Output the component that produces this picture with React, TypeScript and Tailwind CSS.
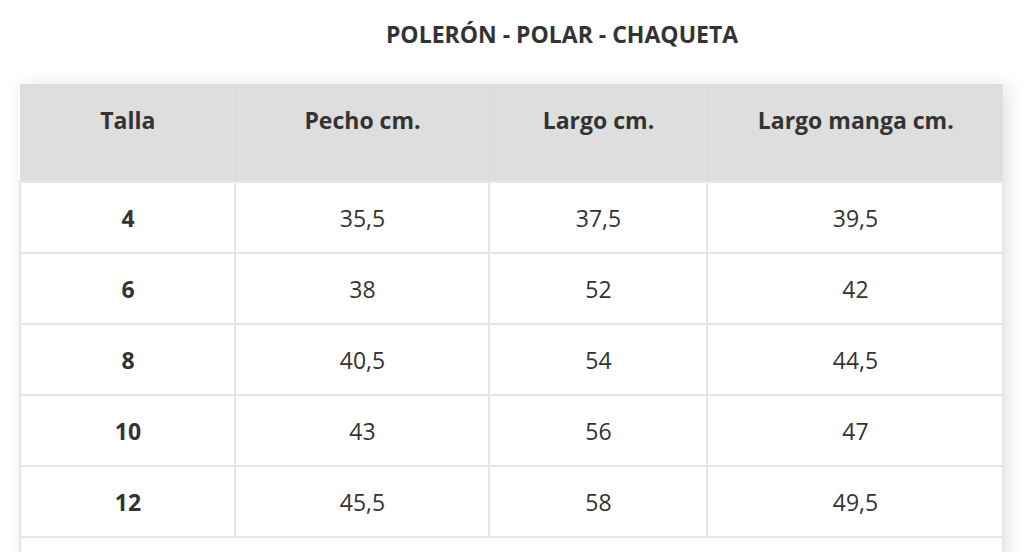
const rows = [
  ['4', '35,5', '37,5', '39,5'],
  ['6', '38', '52', '42'],
  ['8', '40,5', '54', '44,5'],
  ['10', '43', '56', '47'],
  ['12', '45,5', '58', '49,5'],
];

const headers = ['Talla', 'Pecho cm.', 'Largo cm.', 'Largo manga cm.'];
const widths = ['w-[215px]', 'w-[254px]', 'w-[218px]', 'w-[296px]'];

export default function App() {
  return (
    <div
      className="h-[552px] w-[1024px] overflow-hidden bg-white text-[#333]"
      style={{ fontFamily: '"Open Sans", "Liberation Sans", sans-serif' }}
    >
      <h2 className="pt-[20px] pl-[100px] text-center text-[23px] font-bold leading-[28px]">
        POLERÓN - POLAR - CHAQUETA
      </h2>

      <div className="ml-[19px] mt-[36px] w-[983px] shadow-[6px_2px_18px_rgba(0,0,0,0.12)]">
        <table className="w-full table-fixed border-collapse">
          <thead>
            <tr className="h-[98px] bg-[#dedede]">
              {headers.map((h, i) => (
                <th
                  key={h}
                  className={`${widths[i]} border-x border-[#d9d9d9] pt-[22px] pl-[1px] align-top text-[23px] font-bold leading-[28px] first:border-l-0 last:border-r-0`}
                >
                  {h}
                </th>
              ))}
            </tr>
          </thead>
          <tbody>
            {rows.map((r) => (
              <tr key={r[0]} className="h-[71px]">
                {r.map((c, i) => (
                  <td
                    key={i}
                    className={`border-2 border-[#e6e6e6] pl-[1px] text-center text-[23px] leading-[28px] ${
                      i === 0 ? 'font-bold' : ''
                    }`}
                  >
                    {c}
                  </td>
                ))}
              </tr>
            ))}
            <tr className="h-[40px]">
              <td colSpan={4} className="border-2 border-[#e6e6e6]" />
            </tr>
          </tbody>
        </table>
      </div>
    </div>
  );
}
